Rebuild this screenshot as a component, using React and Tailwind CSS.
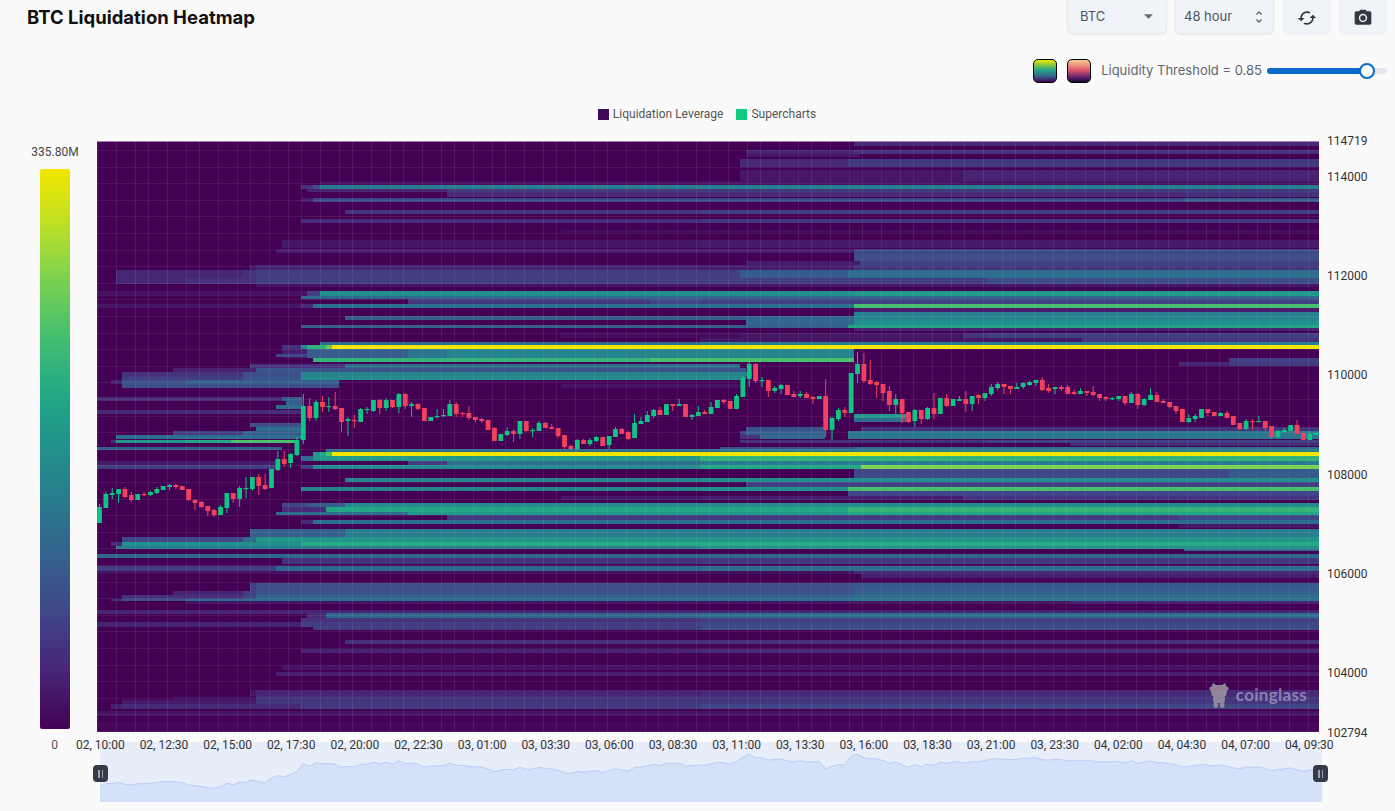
const STOPS = ["#440154", "#482475", "#414487", "#355f8d", "#2a788e", "#21918c", "#22a884", "#44bf70", "#7ad151", "#bddf26", "#f3e600"];

function viridis(v) {
    const t = Math.min(1, v * 1.18) * 10;
    const i = Math.min(9, Math.floor(t));
    const a = STOPS[i], b = STOPS[i + 1], f = t - i;
    const ch = (s, k) => parseInt(s.slice(k, k + 2), 16);
    const mix = (k) => Math.round(ch(a, k) + (ch(b, k) - ch(a, k)) * f);
    return `rgb(${mix(1)},${mix(3)},${mix(5)})`;
}

// [y, height, x, value, x, value, ...] each run lasts until the next x, the last one until the right edge
const BANDS = [
    [142, 4, 854, .1],
    [150, 4, 746, .08, 854, .12],
    [154, 3, 746, .05, 860, 0],
    [159, 8, 740, .1, 848, .14],
    [170, 11, 740, .05, 963, .08],
    [181, 4, 320, .03, 700, .04],
    [185, 4, 301, .12, 313, .2, 320, .35],
    [189, 3, 307, .08, 447, .14],
    [192, 5, 447, .1, 1184, .12],
    [198, 4, 301, .06, 313, .18, 1184, .24],
    [210, 4, 345, .13, 700, .16],
    [219, 4, 301, .1, 700, .13],
    [230, 3, 561, .03],
    [240, 8, 282, .05, 700, .06],
    [249, 4, 276, .06, 282, .07, 854, .18],
    [253, 8, 854, .2],
    [261, 5, 746, .07, 860, .16],
    [265, 5, 250, .05, 256, .08, 700, .07, 854, .13],
    [270, 8, 116, .09, 243, .12, 256, .15, 740, .24, 848, .3],
    [278, 6, 116, .09, 186, .12, 256, .15, 740, .15, 987, .2],
    [284, 3, 256, .04, 650, .05],
    [291, 5, 97, .04, 307, .15, 320, .42, 854, .45],
    [296, 3, 301, .28, 700, .28],
    [299, 5, 408, .13, 650, .18, 700, .16],
    [304, 4, 97, .05, 301, .1, 313, .3, 854, .6],
    [308, 4, 854, .06],
    [312, 4, 854, .36],
    [316, 4, 345, .25, 746, .28, 854, .38],
    [320, 5, 746, .28, 854, .42],
    [325, 3, 301, .25, 848, .5],
    [328, 3, 854, .08],
    [333, 5, 561, .03, 740, .05, 963, .12, 987, .16],
    [338, 4, 700, .05, 1082, .13],
    [342, 4, 320, .3, 700, .36],
    [345, 4, 282, .12, 301, .4, 307, .55, 326, .65, 332, 1],
    [349, 9, 282, .07, 307, .25, 408, .33, 447, .38, 854, 0],
    [354, 3, 276, .18, 307, 0],
    [358, 4, 313, .55, 650, .6, 854, 0, 1229, .15],
    [362, 4, 1179, .09, 1229, .14],
    [364, 4, 250, .12, 345, .3, 740, 0],
    [368, 4, 173, .08, 256, .22, 746, 0],
    [372, 4, 122, .12, 243, .2, 301, .38, 746, .3, 752, 0],
    [376, 4, 122, .15, 243, .22, 301, .4, 746, 0],
    [380, 4, 111, .08, 122, .2, 186, .25, 339, 0],
    [384, 4, 122, .2, 339, 0, 561, .04, 740, 0],
    [397, 4, 97, .1, 282, .25, 302, 0],
    [401, 4, 286, .25, 302, 0],
    [405, 4, 276, .3, 302, 0],
    [410, 4, 97, .1, 302, 0],
    [423, 4, 250, .2, 302, 0],
    [427, 4, 256, .3, 302, 0, 746, .22, 825, 0, 861, .12],
    [414, 4, 854, .45, 906, 0],
    [418, 4, 854, .3, 906, 0],
    [431, 4, 173, .15, 243, .25, 302, 0, 740, .15, 746, .25, 825, 0, 848, .33],
    [435, 4, 116, .3, 300, .4, 302, 0, 740, .12, 760, .28, 825, 0, 848, .33],
    [440, 3, 111, .12, 116, .45, 186, .5, 231, .6, 298, 0, 740, .12, 987, .16],
    [443, 3, 1070, .1],
    [447, 3, 97, .25, 282, 0, 720, .2, 854, .3],
    [449, 3, 326, .3, 720, .35],
    [452, 4, 313, .45, 320, .5, 326, .6, 332, 1],
    [456, 5, 301, .3, 313, .45, 700, .55],
    [461, 4, 97, .06, 276, 0, 408, .15, 447, .3, 700, .35],
    [465, 4, 97, .15, 276, 0, 301, .15, 313, .4, 700, .5, 861, .68],
    [469, 9, 854, .18, 1229, .24],
    [478, 4, 345, .38, 700, .42],
    [482, 5, 746, .15],
    [487, 4, 301, .38, 700, .42, 848, .6],
    [491, 5, 848, .17],
    [496, 4, 561, .05, 700, .07, 963, .13],
    [503, 4, 282, .18, 307, .25, 345, .4],
    [507, 5, 282, .1, 326, .5, 848, .55],
    [512, 3, 276, .3, 408, .45, 848, .5],
    [515, 5, 447, .14, 1179, .18],
    [520, 4, 301, .1, 313, .3],
    [524, 4, 1179, .05],
    [529, 8, 250, .25, 345, .36],
    [537, 5, 122, .18, 243, .3, 256, .44],
    [542, 4, 111, .1, 122, .42, 301, .52],
    [546, 3, 116, .35, 700, .42],
    [549, 2, 1184, .3],
    [554, 4, 97, .28],
    [558, 6, 282, .12, 700, .14],
    [566, 5, 97, .15, 276, .28, 700, .3],
    [571, 3, 97, .04, 854, .1],
    [574, 4, 861, .07],
    [583, 8, 250, .16, 256, .2, 854, .24],
    [591, 4, 173, .08, 243, .15, 256, .22, 854, .27],
    [595, 4, 122, .12, 243, .18, 256, .27, 854, .3],
    [599, 2, 111, .1, 122, .2, 186, .3, 854, .33],
    [601, 3, 186, .05, 1070, .08],
    [610, 4, 97, .08],
    [613, 5, 307, .1, 326, .28, 700, .3],
    [618, 4, 301, .12, 700, .15],
    [622, 5, 97, .08, 301, .15, 700, .18],
    [627, 3, 313, .15, 700, .2],
    [640, 4, 345, .12],
    [649, 4, 301, .08, 700, .1],
    [665, 5, 282, .04],
    [672, 4, 276, .07],
    [690, 6, 250, .05, 256, .08, 700, .1],
    [696, 4, 173, .03, 256, .12],
    [700, 4, 122, .06, 256, .13],
    [704, 5, 111, .07, 122, .1, 300, .14, 700, .18],
    [711, 5, 97, .04],
    [722, 10, 97, .015],
];

// [colour, body top, body bottom, wick top, wick bottom]
const CANDLES = [
    ["g",507,523,504,523],["g",494,508,492,508],["g",493,495,488,499],["g",489,494,489,503],["r",489,497,487,498],
    ["r",495,500,492,502],["g",494,500,494,500],["r",494,495,492,496],["g",492,495,491,496],["g",489,493,487,494],
    ["g",486,490,486,490],["g",485,487,484,490],["r",485,487,484,489],["r",486,490,486,490],["r",489,500,489,501],
    ["r",500,503,499,510],["r",502,507,501,508],["r",506,511,506,516],["r",510,515,509,517],["g",507,515,505,515],
    ["g",493,508,493,513],["r",493,499,493,503],["g",488,499,486,507],["g",488,489,477,498],["g",477,489,477,491],
    ["r",477,486,474,495],["r",485,489,474,490],["g",469,488,469,488],["g",459,470,451,471],["r",459,464,451,467],
    ["g",454,463,453,468],["g",440,455,437,456],["g",406,440,394,444],["r",406,418,398,421],["g",402,418,400,421],
    ["r",402,407,396,412],["g",406,407,397,412],["r",406,409,392,410],["r",408,422,408,432],["g",419,421,417,436],
    ["r",420,421,415,428],["g",409,422,408,422],["g",409,410,407,414],["g",400,411,400,412],["r",400,408,399,414],
    ["g",400,408,398,411],["r",400,407,400,408],["g",394,407,393,413],["r",394,406,393,409],["g",404,406,402,417],
    ["r",404,409,403,410],["r",408,421,408,421],["g",417,421,417,421],["g",416,417,409,418],["g",415,416,409,417],
    ["g",404,416,400,416],["r",404,414,402,417],["r",413,414,412,417],["r",413,418,406,420],["r",417,420,417,422],
    ["r",419,421,418,423],["r",420,430,420,430],["r",428,441,427,441],["g",434,441,434,441],["g",431,435,427,436],
    ["r",431,434,429,442],["g",421,434,421,439],["r",421,431,421,432],["g",430,431,428,437],["g",423,431,421,431],
    ["r",423,428,422,428],["r",427,429,424,429],["r",428,436,428,438],["r",435,447,435,449],["r",446,449,445,449],
    ["g",440,449,439,451],["r",440,444,439,444],["g",440,444,438,446],["g",437,441,436,442],["r",437,446,437,446],
    ["g",436,445,436,449],["g",429,437,427,437],["r",429,434,428,434],["r",432,439,431,440],["g",423,438,414,438],
    ["g",421,424,417,424],["g",415,422,411,422],["g",410,416,409,418],["r",410,415,407,415],["g",404,415,404,415],
    ["r",404,406,404,411],["g",404,406,399,406],["r",404,417,404,417],["g",415,417,414,420],["g",412,416,406,416],
    ["r",412,414,410,414],["g",407,414,402,414],["g",400,408,400,408],["r",400,402,399,404],["r",401,409,401,409],
    ["g",396,409,394,409],
    ["g",378,397,376,397],["g",364,379,362,387],["r",364,381,363,383],["g",380,381,377,387],["r",380,391,380,397],
    ["g",388,391,386,393],["g",385,389,384,394],["r",385,395,385,395],["r",394,397,391,397],["g",394,396,391,398],
    ["r",394,398,392,398],["r",397,399,396,404],["g",396,399,396,399],["r",396,430,379,437],["g",418,430,417,440],
    ["g",410,419,408,421],["r",410,413,407,417],["g",373,413,373,413],["g",364,374,352,383],["r",364,381,353,383],
    ["r",380,384,360,385],["r",382,385,381,398],["r",384,393,384,401],["r",391,405,386,411],["g",399,405,394,414],
    ["r",399,413,399,423],["r",412,422,412,423],["g",410,421,409,427],["r",410,419,410,424],["g",408,419,407,420],
    ["r",408,414,393,419],["g",398,414,398,414],["r",398,406,394,407],["g",399,406,399,406],["g",399,401,396,401],
    ["r",399,404,391,412],["g",396,404,396,411],["r",395,398,394,404],["g",393,398,393,401],["g",387,394,384,396],
    ["g",384,388,382,390],["r",384,387,384,394],["r",386,389,386,394],["g",387,389,383,389],["g",383,387,382,389],
    ["g",382,385,381,386],["g",380,383,380,386],["r",380,390,377,391],["r",388,391,384,393],["g",387,389,387,394],
    ["r",387,389,385,391],["r",387,394,385,394],["r",392,394,390,395],["g",391,394,388,394],["r",391,393,391,396],
    ["r",392,395,386,396],["r",394,398,394,401],["r",397,399,396,401],["g",398,399,397,400],["g",396,399,396,401],
    ["r",396,403,396,405],["g",394,403,392,403],["r",394,405,393,409],["g",399,405,398,406],["g",395,400,388,400],
    ["r",395,402,392,402],["r",401,403,399,403],["r",402,407,402,408],["r",406,411,406,414],["r",409,422,409,422],
    ["g",418,422,414,423],["g",416,419,414,422],["g",409,418,409,418],["r",409,413,409,416],["r",412,416,412,416],
    ["g",413,416,412,416],["r",413,418,411,418],["r",416,425,416,425],["r",423,429,423,430],["g",421,429,419,430],
    ["r",421,422,419,430],["g",421,422,416,422],["r",421,428,421,431],["r",426,437,426,438],["g",431,437,430,437],
    ["g",430,432,428,432],["g",425,431,425,431],["r",425,434,420,434],["r",433,440,431,440],["g",434,440,431,440],
    ["g",433,435,433,435],
];

const GRID_X = [];
for (let x = 97, i = 0; x < 1319; i++) {
    GRID_X.push(x);
    x += [19, 19, 13][i % 3];
}
const GRID_Y = [];
for (let y = 150; y < 732; y += 16.6) GRID_Y.push(y);

const candleX = (i) => 99.5 + i * 6.37;
const Y_TICKS = [114719, 114000, 112000, 110000, 108000, 106000, 104000, 102794];
const X_TICKS = [
    "02, 10:00", "02, 12:30", "02, 15:00", "02, 17:30", "02, 20:00", "02, 22:30", "03, 01:00", "03, 03:30", "03, 06:00", "03, 08:30",
    "03, 11:00", "03, 13:30", "03, 16:00", "03, 18:30", "03, 21:00", "03, 23:30", "04, 02:00", "04, 04:30", "04, 07:00", "04, 09:30",
];

const chartFont = { fontFamily: "Roboto, sans-serif" };

function Heatmap() {
    return (
        <svg viewBox="97 141 1222 591" width="1222" height="591" className="block" shapeRendering="crispEdges">
            <rect x="97" y="141" width="1222" height="591" fill="#440154" />
            {BANDS.map((b, i) => {
                const [y, h, ...runs] = b;
                const rects = [];
                for (let k = 0; k < runs.length; k += 2) {
                    const end = k + 2 < runs.length ? runs[k + 2] : 1319;
                    if (runs[k + 1] > 0) {
                        rects.push(<rect key={k} x={runs[k]} y={y} width={end - runs[k]} height={h} fill={viridis(runs[k + 1])} />);
                    }
                }
                return <g key={i}>{rects}</g>;
            })}
            {GRID_X.map((x) => <rect key={x} x={x} y="141" width="1" height="591" fill="#ffffff" opacity="0.07" />)}
            {GRID_Y.map((y) => <rect key={y} x="97" y={Math.round(y)} width="1222" height="1" fill="#ffffff" opacity="0.07" />)}
            <rect x="97" y="141" width="1222" height="1" fill="#ffffff" opacity="0.5" />
            <g shapeRendering="auto">
                {CANDLES.map((c, i) => {
                    const x = candleX(i);
                    const fill = c[0] === "g" ? "#0fc585" : "#f2405f";
                    return (
                        <g key={i} fill={fill}>
                            <rect x={x - 0.5} y={c[3]} width="1" height={c[4] - c[3]} />
                            <rect x={x - 2.4} y={c[1]} width="4.8" height={Math.max(1.2, c[2] - c[1])} />
                        </g>
                    );
                })}
            </g>
        </svg>
    );
}

function Mascot() {
    return (
        <svg width="22" height="26" viewBox="0 0 22 26" className="block">
            <g fill="#8e8699">
                <path d="M1 6 L4 4 L5 1 L8 3 H14 L17 1 L18 4 L21 6 L19 9 L18 14 H4 L3 9 Z" />
                <rect x="5" y="13" width="12" height="8" rx="3" />
                <rect x="5.5" y="20" width="4.5" height="6" rx="2" />
                <rect x="12" y="20" width="4.5" height="6" rx="2" />
            </g>
            <g fill="#d0506f">
                <circle cx="7" cy="7" r="0.7" /><circle cx="10" cy="6" r="0.7" /><circle cx="13" cy="6.5" r="0.7" /><circle cx="16" cy="6" r="0.7" />
            </g>
        </svg>
    );
}

function Brush() {
    const pts = CANDLES.map((c, i) => `${candleX(i) - 100},${(c[0] === "g" ? c[1] : c[2]) * 0.228 - 71}`);
    return (
        <div className="relative ml-[100px] -mt-[10px] h-[60px] w-[1222px] bg-[#e8edfa]">
            <svg viewBox="0 0 1222 60" width="1222" height="60" className="block">
                <polygon points={`0,60 ${pts.join(" ")} 1222,28 1222,60`} fill="#d5e0f9" />
                <polyline points={pts.join(" ")} fill="none" stroke="#b9cdf8" strokeWidth="1" />
            </svg>
            <BrushHandle className="absolute -left-[7px] top-[23px]" />
            <BrushHandle className="absolute -right-[6px] top-[23px]" />
        </div>
    );
}

function BrushHandle({ className }) {
    return (
        <div className={`flex h-[17px] w-[15px] items-center justify-center gap-[2px] rounded-[4px] bg-[#343a48] ${className}`}>
            <span className="h-[8px] w-[1.5px] bg-[#9aa0ad]" />
            <span className="h-[8px] w-[1.5px] bg-[#9aa0ad]" />
        </div>
    );
}

export default function App() {
    return (
        <div className="h-[811px] w-full overflow-hidden bg-[#fafafa] font-['Inter',sans-serif]">
            <header className="flex h-[35px] items-center pl-[27px] pr-[8px]">
                <h1 className="pt-[1px] text-[18.5px] font-bold text-[#111]">BTC Liquidation Heatmap</h1>
                <div className="ml-auto flex items-start gap-[8px] self-start">
                    <div className="-mt-[6px] flex h-[40px] w-[100px] items-center justify-between rounded-md border border-[#e6eaf0] bg-[#f0f4f8] pl-[12px] pr-[13px] pt-[5px] text-[13px] text-[#4b5563] shadow-[0_1px_2px_rgba(21,21,21,0.08)]">
                        BTC
                        <svg width="9" height="5" viewBox="0 0 10 5"><path d="M0 0h10L5 5z" fill="#636b74" /></svg>
                    </div>
                    <div className="-mt-[6px] flex h-[40px] w-[99px] items-center justify-between rounded-md border border-[#e6eaf0] bg-[#f0f4f8] pl-[8px] pr-[6px] pt-[5px] text-[13px] text-[#4b5563] shadow-[0_1px_2px_rgba(21,21,21,0.08)]">
                        48 hour
                        <svg width="16" height="16" viewBox="0 0 24 24" fill="#636b74"><path d="M12 5.83 15.17 9l1.41-1.41L12 3 7.41 7.59 8.83 9 12 5.83zm0 12.34L8.83 15l-1.41 1.41L12 21l4.59-4.59L15.17 15 12 18.17z" /></svg>
                    </div>
                    <button className="ml-[1px] -mt-[6px] flex h-[41px] w-[48px] items-center justify-center rounded-md bg-[#f0f4f8] pt-[6px]">
                        <svg width="20" height="20" viewBox="0 0 24 24" fill="#32383e"><path d="m19 8-4 4h3c0 3.31-2.69 6-6 6-1.01 0-1.97-.25-2.8-.7l-1.46 1.46C8.97 19.54 10.43 20 12 20c4.42 0 8-3.58 8-8h3l-4-4zM6 12c0-3.31 2.69-6 6-6 1.01 0 1.97.25 2.8.7l1.46-1.46C15.03 4.46 13.57 4 12 4c-4.42 0-8 3.58-8 8H1l4 4 4-4H6z" /></svg>
                    </button>
                    <button className="-mt-[6px] flex h-[41px] w-[48px] items-center justify-center rounded-md bg-[#f0f4f8] pt-[6px]">
                        <svg width="20" height="20" viewBox="0 0 24 24" fill="#32383e"><circle cx="12" cy="12" r="3.2" /><path d="M9 2 7.17 4H4c-1.1 0-2 .9-2 2v12c0 1.1.9 2 2 2h16c1.1 0 2-.9 2-2V6c0-1.1-.9-2-2-2h-3.17L15 2H9zm3 15c-2.76 0-5-2.24-5-5s2.24-5 5-5 5 2.24 5 5-2.24 5-5 5z" /></svg>
                    </button>
                </div>
            </header>

            <div className="mt-[24px] flex h-[24px] items-center justify-end pr-[8px]">
                <span className="h-[24px] w-[24px] rounded-[5px] border border-black bg-[linear-gradient(#f3e600,#22a884_45%,#355f8d_75%,#440154)]" />
                <span className="ml-[10px] h-[24px] w-[24px] rounded-[5px] border border-black bg-[linear-gradient(#f5cf95,#e2586a_45%,#5a1d6e_80%,#1a0b2e)]" />
                <span className="ml-[10px] text-[13px] text-[#5f666f]">Liquidity Threshold = 0.85</span>
                <div className="relative ml-[5px] h-[6px] w-[120px] rounded-full bg-[#e3e8f0]">
                    <div className="h-[6px] w-[100px] rounded-full bg-[#0b6bcb]" />
                    <div className="absolute left-[92px] top-[-5px] h-[16px] w-[16px] rounded-full border-2 border-[#0b6bcb] bg-white" />
                </div>
            </div>

            <div style={chartFont} className="mt-[23px] flex h-[16px] items-center justify-center gap-[13px] pl-[19px] text-[12px] text-[#555]">
                <span className="flex items-center gap-[4px]"><i className="h-[11px] w-[11px] bg-[#3f0a5a]" />Liquidation Leverage</span>
                <span className="flex items-center gap-[4px]"><i className="h-[11px] w-[11px] bg-[#0ecb81]" />Supercharts</span>
            </div>

            <div style={chartFont} className="mt-[19px] flex h-[591px]">
                <div className="flex w-[97px] flex-col items-center pl-[27px] pr-[14px]">
                    <span className="mt-[3px] whitespace-nowrap text-[12px] leading-[16px] text-[#444]">335.80M</span>
                    <div className="mt-[9px] h-[560px] w-[30px] shrink-0 rounded-[2px] bg-[linear-gradient(#f3e600,#bddf26_10%,#7ad151_20%,#44bf70_30%,#22a884_40%,#21918c_50%,#2a788e_60%,#355f8d_70%,#414487_80%,#482475_90%,#440154)]" />
                </div>
                <div className="relative w-[1222px]">
                    <Heatmap />
                    <div className="absolute bottom-[24px] right-[12px] flex items-center gap-[6px]">
                        <Mascot />
                        <span className="font-['Lato',sans-serif] text-[17px] font-bold leading-[20px] tracking-[0.3px] text-white/40">coinglass</span>
                    </div>
                </div>
                <div className="relative flex-1">
                    {Y_TICKS.map((p) => (
                        <span
                            key={p}
                            className="absolute left-[8px] text-[12px] leading-[16px] text-[#333]"
                            style={{ top: 176 + (114000 - p) * 0.0496 - 141 - 7 }}
                        >
                            {p}
                        </span>
                    ))}
                </div>
            </div>

            <div style={chartFont} className="relative z-10 mt-[6px] flex h-[14px] items-center pr-[62px] text-[12px] leading-[14px] text-[#333]">
                <span className="w-[76px] pr-[18px] text-right text-[#555]">0</span>
                <div className="flex flex-1 justify-between">
                    {X_TICKS.map((t) => <span key={t} className="w-[48px] whitespace-nowrap text-center">{t}</span>)}
                </div>
            </div>
            <Brush />
        </div>
    );
}
